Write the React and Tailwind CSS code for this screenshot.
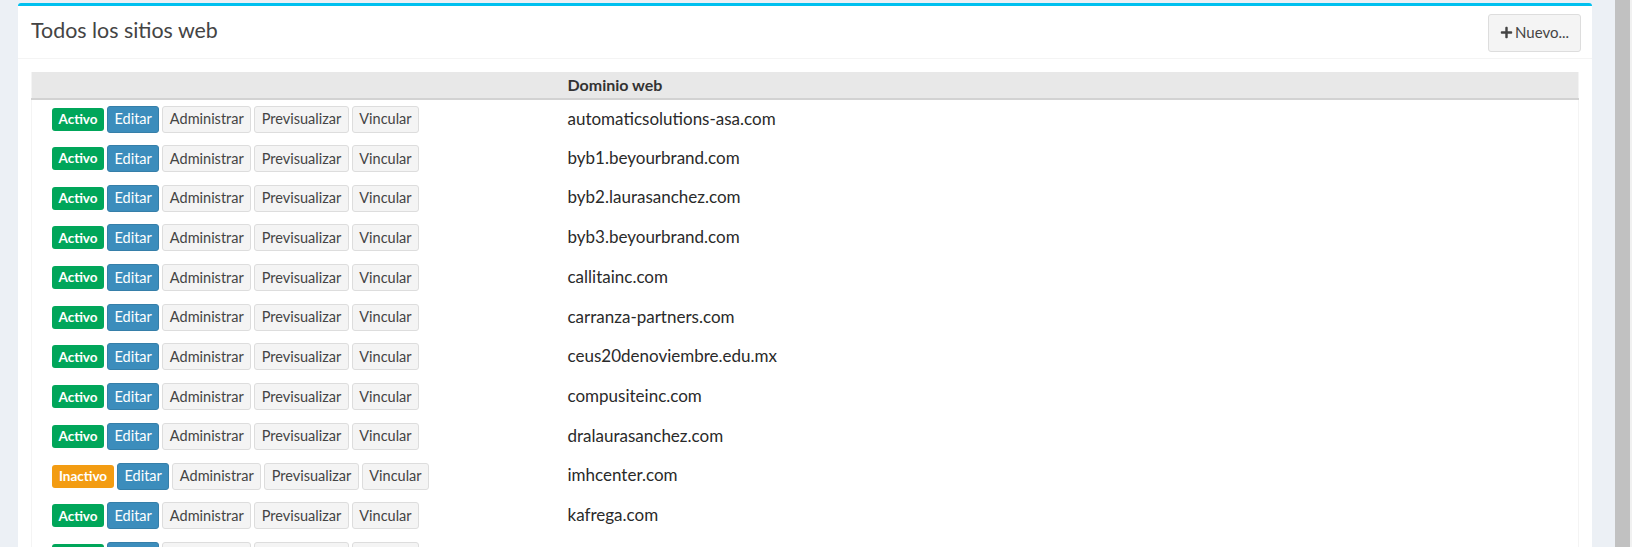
import React from "react";
import { FaPlus } from "react-icons/fa";

const sites = [
  { domain: "automaticsolutions-asa.com", active: true },
  { domain: "byb1.beyourbrand.com", active: true },
  { domain: "byb2.laurasanchez.com", active: true },
  { domain: "byb3.beyourbrand.com", active: true },
  { domain: "callitainc.com", active: true },
  { domain: "carranza-partners.com", active: true },
  { domain: "ceus20denoviembre.edu.mx", active: true },
  { domain: "compusiteinc.com", active: true },
  { domain: "dralaurasanchez.com", active: true },
  { domain: "imhcenter.com", active: false },
  { domain: "kafrega.com", active: true },
  { domain: "laurasanchez.com", active: true },
];

const font = { fontFamily: "Lato, 'Liberation Sans', sans-serif" };

const SiteRow = ({ site }) => (
  <tr className="h-[39.7px]">
    <td className="w-[528px] pl-5 align-middle">
      <div className="flex items-center gap-[3px]">
        {site.active ? (
          <span className="h-[23px] w-[52px] rounded-[3px] bg-[#00a65a] text-white text-[13.5px] font-bold flex items-center justify-center">
            Activo
          </span>
        ) : (
          <span className="h-[23px] w-[62px] rounded-[3px] bg-[#f39c12] text-white text-[13.5px] font-bold flex items-center justify-center">
            Inactivo
          </span>
        )}
        <button className="h-[27px] px-[6.5px] rounded-[3px] bg-[#3c8dbc] border border-[#367fa9] text-white text-[14.5px]">
          Editar
        </button>
        <button className="h-[27px] px-[6.5px] rounded-[3px] bg-[#f4f4f4] border border-[#ddd] text-[#444] text-[14.5px]">
          Administrar
        </button>
        <button className="h-[27px] px-[6.5px] rounded-[3px] bg-[#f4f4f4] border border-[#ddd] text-[#444] text-[14.5px]">
          Previsualizar
        </button>
        <button className="h-[27px] px-[6.5px] rounded-[3px] bg-[#f4f4f4] border border-[#ddd] text-[#444] text-[14.5px]">
          Vincular
        </button>
      </div>
    </td>
    <td className="pl-2 align-middle text-[17px] text-[#2a2a2a] pb-[2px]">{site.domain}</td>
  </tr>
);

export default function App() {
  return (
    <div className="flex h-[547px] w-full overflow-hidden bg-[#ecf0f5]" style={font}>
      <div className="flex-1 pl-[18px] pr-[23px] pt-[3px]">
        <div className="bg-white border-t-[3px] border-[#00c0ef] rounded-t-[3px] h-full">
          <div className="flex items-center justify-between h-[53px] pl-[13px] pr-[11px] border-b border-[#f4f4f4]">
            <h3 className="text-[21.4px] text-[#444] mb-[3px]">Todos los sitios web</h3>
            <button className="flex items-center gap-[2px] h-[38px] w-[93px] justify-center rounded-[3px] bg-[#f4f4f4] border border-[#ddd] text-[#444] text-[15px] mt-[1px]">
              <FaPlus className="text-[13px]" />
              Nuevo...
            </button>
          </div>
          <div className="px-[13px] pt-[13px]">
            <table className="w-full border-x border-[#f4f4f4] border-collapse">
              <thead>
                <tr className="h-[27px] bg-[#e8e8e8] border-b-2 border-[#d2d2d2]">
                  <th className="w-[528px]"></th>
                  <th className="pl-2 text-left text-[16px] font-bold text-[#333]">Dominio web</th>
                </tr>
              </thead>
              <tbody>
                {sites.map((s) => (
                  <SiteRow key={s.domain} site={s} />
                ))}
              </tbody>
            </table>
          </div>
        </div>
      </div>
      <div className="w-[17px] bg-[#f1f1f1] flex justify-center">
        <div className="w-[17px] bg-[#c1c1c1] mr-[2px]"></div>
      </div>
    </div>
  );
}
